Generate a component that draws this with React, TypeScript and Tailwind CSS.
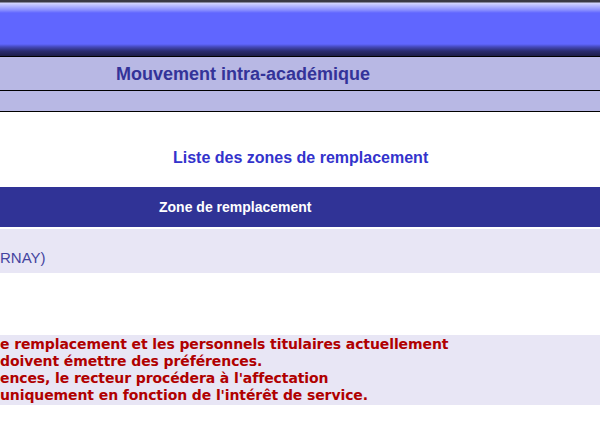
const NOTE = [
  "e remplacement et les personnels titulaires actuellement",
  "doivent émettre des préférences.",
  "ences, le recteur procédera à l'affectation",
  "uniquement en fonction de l'intérêt de service.",
]

export default function App() {
  return (
    <div className="w-[600px] h-[448px] overflow-hidden bg-white font-['Liberation_Sans',Arial,sans-serif]">
      <div className="h-[56px] bg-[linear-gradient(to_bottom,#3a3a44_0px,#3a3a44_2px,#d4d7ff_3px,#8a8fff_10px,#6066ff_13px,#6066ff_44px,#4448b8_47px,#2a2c70_51px,#1c1d48_56px)]" />
      <div className="border-t border-black h-[34px] bg-[#b8b8e4] flex items-center pl-[116px]">
        <span className="text-[18px] font-bold text-[#333399] leading-none">Mouvement intra-académique</span>
      </div>
      <div className="border-t border-black h-[22px] bg-[#b8b8e4] border-b" />

      <div className="pt-[37px] pl-[173px]">
        <span className="text-[16px] font-bold text-[#3333cc] leading-[18px] block">
          Liste des zones de remplacement
        </span>
      </div>

      <div className="mt-[20px] h-[40px] bg-[#303396] flex items-center pl-[159px]">
        <span className="text-[14px] font-bold text-white">Zone de remplacement</span>
      </div>
      <div className="mt-[2px] h-[44px] bg-[#e8e6f5] flex items-end pb-[4px]">
        <span className="text-[15px] text-[#4444a0]">RNAY)</span>
      </div>

      <div className="mt-[62px] bg-[#e8e6f5] py-[1px] font-['DejaVu_Sans',Verdana,sans-serif] text-[14px] tracking-[-0.1px] font-bold leading-[17px] text-[#b00000]">
        {NOTE.map((line) => (
          <div key={line} className="whitespace-nowrap">
            {line}
          </div>
        ))}
      </div>
    </div>
  )
}
